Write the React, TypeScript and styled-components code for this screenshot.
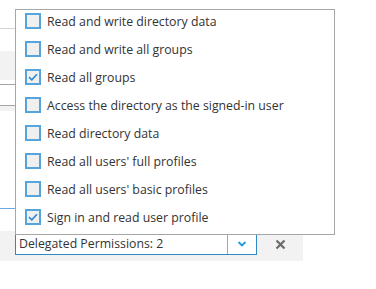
import styled, { createGlobalStyle } from "styled-components";

const GlobalStyle = createGlobalStyle`
  html, body {
    margin: 0;
    padding: 0;
    background: #ffffff;
  }
  body {
    font-family: "Open Sans", "Noto Sans", sans-serif;
  }
`;

const permissions = [
  { label: "Read and write directory data", checked: false },
  { label: "Read and write all groups", checked: false },
  { label: "Read all groups", checked: true },
  { label: "Access the directory as the signed-in user", checked: false },
  { label: "Read directory data", checked: false },
  { label: "Read all users' full profiles", checked: false },
  { label: "Read all users' basic profiles", checked: false },
  { label: "Sign in and read user profile", checked: true },
];

const Screen = styled.div`
  position: relative;
  width: 376px;
  height: 289px;
  overflow: hidden;
`;

const Backdrop = styled.div`
  display: flex;
  flex-direction: column;
  width: 303px;
`;

const Gap = styled.div<{ h: number }>`
  height: ${(p) => p.h}px;
`;

const Rule = styled.div<{ color: string }>`
  height: 1px;
  background: ${(p) => p.color};
`;

const Band = styled.div<{ h: number }>`
  height: ${(p) => p.h}px;
  background: #f2f2f2;
`;

const Footer = styled.div`
  display: flex;
  align-items: flex-start;
  height: 30px;
  padding: 2px 0 0 15px;
  box-sizing: border-box;
  background: #f2f2f2;
`;

const Select = styled.div`
  display: flex;
  width: 243px;
  height: 22px;
  box-sizing: border-box;
  background: #ffffff;
  border: 1px solid #2e89c4;
  border-top: none;
`;

const SelectText = styled.div`
  flex: 1;
  padding-left: 3px;
  font-size: 12.3px;
  line-height: 21px;
  color: #333333;
  white-space: nowrap;
`;

const Caret = styled.div`
  display: flex;
  align-items: center;
  justify-content: center;
  width: 28px;
  border-left: 1px solid #a6a6a6;
`;

const Clear = styled.div`
  display: flex;
  align-items: center;
  justify-content: center;
  width: 46px;
  height: 22px;
`;

const Popup = styled.div`
  position: absolute;
  left: 15px;
  top: 9px;
  width: 320px;
  height: 226px;
  box-sizing: border-box;
  background: #ffffff;
  border: 1px solid #a6a6a6;
  overflow: hidden;
`;

const List = styled.div`
  display: flex;
  flex-direction: column;
  margin-top: -3px;
`;

const Option = styled.label`
  display: flex;
  align-items: center;
  gap: 6px;
  height: 28px;
  padding-left: 9px;
  font-size: 12.3px;
  color: #333333;
  white-space: nowrap;
`;

const Box = styled.span`
  display: flex;
  align-items: center;
  justify-content: center;
  width: 16px;
  height: 16px;
  box-sizing: border-box;
  border: 2px solid #55a5dc;
  background: #f0f0f0;
`;

function CheckBox({ checked }: { checked: boolean }) {
  return (
    <Box>
      {checked && (
        <svg width="10" height="8" viewBox="0 0 10 8">
          <path d="M1 4.2 L3.8 6.8 L9 1.2" fill="none" stroke="#2b88d8" strokeWidth="1.6" />
        </svg>
      )}
    </Box>
  );
}

export default function App() {
  return (
    <Screen>
      <GlobalStyle />
      <Backdrop>
        <Gap h={28} />
        <Rule color="#d4d4d4" />
        <Gap h={22} />
        <Band h={29} />
        <Gap h={4} />
        <Rule color="#a6a6a6" />
        <Gap h={20} />
        <Rule color="#a6a6a6" />
        <Band h={5} />
        <Gap h={97} />
        <Rule color="#6fa8dc" />
        <Gap h={22} />
        <Footer>
          <Select>
            <SelectText>Delegated Permissions: 2</SelectText>
            <Caret>
              <svg width="10" height="6" viewBox="0 0 10 6">
                <path d="M1.5 1 L5 4.5 L8.5 1" fill="none" stroke="#1e9be0" strokeWidth="1.8" />
              </svg>
            </Caret>
          </Select>
          <Clear>
            <svg width="11" height="11" viewBox="0 0 11 11">
              <path d="M1.5 1.5 L9.5 9.5 M9.5 1.5 L1.5 9.5" stroke="#6b6b6b" strokeWidth="2.2" />
            </svg>
          </Clear>
        </Footer>
      </Backdrop>
      <Popup>
        <List>
          {permissions.map((p) => (
            <Option key={p.label}>
              <CheckBox checked={p.checked} />
              {p.label}
            </Option>
          ))}
        </List>
      </Popup>
    </Screen>
  );
}
